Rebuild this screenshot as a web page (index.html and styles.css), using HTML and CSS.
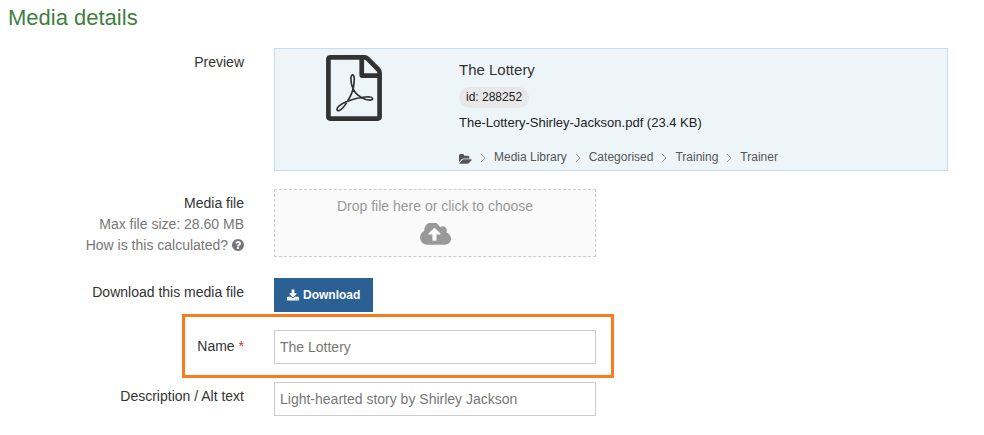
FILE: index.html
```
<!DOCTYPE html>
<html lang="en">
<head>
    <meta charset="UTF-8">
    <meta name="viewport" content="width=device-width, initial-scale=1.0">
    <title>Media details</title>
    <link rel="stylesheet" href="styles.css">
</head>
<body>
    <form class="media-form">
        <h2>Media details</h2>

        <div class="row">
            <div class="label">Preview</div>
            <div class="preview">
                <div class="preview-icon">
                    <svg class="pdf-icon" viewBox="30 30 166 196" fill="none" stroke="currentColor" stroke-linejoin="round">
                        <path stroke-width="14" d="M44 37H144Q149 37 153 41L185 73Q189 77 189 83V213Q189 219 183 219H43Q37 219 37 213V43Q37 37 44 37ZM136 37V91H188"/>
                        <path stroke-width="5" d="M110 130C102 112 102 90 109 89C116 90 114 112 111 128C106 150 84 190 69 195C60 197 60 188 69 181C86 167 130 154 157 154C170 155 172 162 162 164C145 165 120 152 110 130Z"/>
                    </svg>
                </div>
                <div class="preview-info">
                    <h3>The Lottery</h3>
                    <span class="badge">id: 288252</span>
                    <p>The-Lottery-Shirley-Jackson.pdf (23.4 KB)</p>
                    <nav class="breadcrumb" aria-label="Folder">
                        <a href="#" aria-label="Root folder"><svg class="folder-icon" viewBox="0 128 1920 1408"><path d="M1879 1080q0 31-31 66l-336 396q-43 51-120.5 86.5t-143.5 35.5h-1088q-34 0-60.5-13t-26.5-43q0-31 31-66l336-396q43-51 120.5-86.5t143.5-35.5h1088q34 0 60.5 13t26.5 43zm-343-344v160h-832q-94 0-197 47.5t-164 119.5l-337 396-5 6q0-4-.5-12.5t-.5-12.5v-960q0-92 66-158t158-66h320q92 0 158 66t66 158v32h544q92 0 158 66t66 158z"/></svg></a>
                        <svg class="chevron" viewBox="0 0 6 10"><path d="M1 1l4 4-4 4"/></svg>
                        <a href="#">Media Library</a>
                        <svg class="chevron" viewBox="0 0 6 10"><path d="M1 1l4 4-4 4"/></svg>
                        <a href="#">Categorised</a>
                        <svg class="chevron" viewBox="0 0 6 10"><path d="M1 1l4 4-4 4"/></svg>
                        <a href="#">Training</a>
                        <svg class="chevron" viewBox="0 0 6 10"><path d="M1 1l4 4-4 4"/></svg>
                        <a href="#">Trainer</a>
                    </nav>
                </div>
            </div>
        </div>

        <div class="row">
            <div class="label">
                <div id="file-label">Media file</div>
                <div class="hint">Max file size: 28.60 MB</div>
                <a class="hint" href="#">How is this calculated? <svg class="help-icon" viewBox="128 128 1536 1536"><path d="M1024 1376v-192q0-14-9-23t-23-9h-192q-14 0-23 9t-9 23v192q0 14 9 23t23 9h192q14 0 23-9t9-23zm256-672q0-88-55.5-163t-138.5-116-170-41q-243 0-371 213-15 24 8 42l132 100q7 6 19 6 16 0 25-12 53-68 86-92 34-24 86-24 48 0 85.5 26t37.5 59q0 38-20 61t-68 45q-63 28-115.5 86.5t-52.5 125.5v36q0 14 9 23t23 9h192q14 0 23-9t9-23q0-19 21.5-49.5t54.5-49.5q32-18 49-28.5t46-35 44.5-48 28-60.5 12.5-81zm384 192q0 209-103 385.5t-279.5 279.5-385.5 103-385.5-103-279.5-279.5-103-385.5 103-385.5 279.5-279.5 385.5-103 385.5 103 279.5 279.5 103 385.5z"/></svg></a>
            </div>
            <button type="button" class="dropzone" aria-describedby="file-label">
                <span>Drop file here or click to choose</span>
                <svg class="cloud-icon" viewBox="0 256 1920 1280"><path d="M1280 864q0-14-9-23l-352-352q-9-9-23-9t-23 9l-351 351q-10 12-10 24 0 14 9 23t23 9h224v352q0 13 9.5 22.5t22.5 9.5h192q13 0 22.5-9.5t9.5-22.5v-352h224q13 0 22.5-9.5t9.5-22.5zm640 288q0 159-112.5 271.5t-271.5 112.5h-1088q-185 0-316.5-131.5t-131.5-316.5q0-130 70-240t188-165q-2-30-2-43 0-212 150-362t362-150q156 0 285.5 87t188.5 231q71-62 166-62 106 0 181 75t75 181q0 76-41 138 130 31 213.5 135.5t83.5 238.5z"/></svg>
            </button>
        </div>

        <div class="row">
            <div class="label" id="download-label">Download this media file</div>
            <button type="button" class="btn" aria-describedby="download-label">
                <svg class="download-icon" viewBox="64 0 1664 1536"><path d="M1344 1344q0-26-19-45t-45-19-45 19-19 45 19 45 45 19 45-19 19-45zm256 0q0-26-19-45t-45-19-45 19-19 45 19 45 45 19 45-19 19-45zm128-224v320q0 40-28 68t-68 28h-1472q-40 0-68-28t-28-68v-320q0-40 28-68t68-28h465l135 136q58 56 136 56t136-56l136-136h464q40 0 68 28t28 68zm-325-569q17 41-14 70l-448 448q-18 19-45 19t-45-19l-448-448q-31-29-14-70 17-39 59-39h256v-448q0-26 19-45t45-19h256q26 0 45 19t19 45v448h256q42 0 59 39z"/></svg>
                Download
            </button>
        </div>

        <div class="row highlight">
            <label class="label" for="name">Name <span class="required">*</span></label>
            <input type="text" id="name" value="The Lottery" required>
        </div>

        <div class="row">
            <label class="label" for="description">Description / Alt text</label>
            <input type="text" id="description" value="Light-hearted story by Shirley Jackson">
        </div>
    </form>
</body>
</html>
```
FILE: styles.css
```
*,
*::after {
    box-sizing: border-box;
}
body {
    font-family: "Liberation Sans", Arial, sans-serif;
    font-size: 14px;
    line-height: 21px;
    color: #333;
    background: #fff;
    margin: 0;
}
.media-form {
    display: flex;
    flex-direction: column;
    gap: 18px;
    padding: 6px 36px 18px 8px;
}
h2 {
    color: #3f7f3f;
    font-size: 22px;
    font-weight: normal;
    line-height: 24px;
    margin: 0;
}
h3 {
    font-size: 15px;
    font-weight: normal;
    line-height: 21px;
    margin: 0;
}
p {
    margin: 0;
    color: #222;
    font-size: 13px;
    line-height: 21px;
}
a {
    color: #555;
    text-decoration: none;
}
svg {
    fill: currentColor;
}
.row {
    display: grid;
    grid-template-columns: 236px 1fr;
    column-gap: 30px;
    align-items: start;
    justify-items: start;
}
.label {
    justify-self: end;
    padding-top: 4px;
    text-align: right;
}
.hint {
    color: #777;
}
.help-icon {
    width: 12px;
    height: 12px;
    vertical-align: -1px;
}
.required {
    color: #d0312d;
}

/* Preview panel */
.preview {
    display: grid;
    grid-template-columns: 158px 1fr;
    column-gap: 26px;
    width: 100%;
    background: #edf5f9;
    border: 1px solid #c5dff0;
}
.preview-icon {
    display: flex;
    justify-content: center;
    padding-top: 6px;
}
.preview-icon .pdf-icon {
    width: 56px;
    height: 66px;
    fill: none;
}
.preview-info {
    display: flex;
    flex-direction: column;
    align-items: flex-start;
    gap: 4px;
    padding: 10px 0 2px;
}
.badge {
    background: #e9e8e9;
    border-radius: 11px;
    color: #222;
    font-size: 12px;
    line-height: 21px;
    margin-top: 3px;
    padding: 0 7px;
}
.breadcrumb {
    display: flex;
    align-items: center;
    gap: 8px;
    font-size: 12px;
    line-height: 21px;
    margin-top: 10px;
}
.folder-icon {
    display: block;
    width: 13px;
    height: 10px;
    overflow: visible;
}
.chevron {
    width: 6px;
    height: 10px;
    fill: none;
    stroke: #999;
}

/* Fields */
.dropzone {
    display: flex;
    flex-direction: column;
    align-items: center;
    gap: 6px;
    width: 100%;
    max-width: 322px;
    background: #fafafa;
    border: 1px dashed #ccc;
    color: #999;
    cursor: pointer;
    font: inherit;
    margin-bottom: 3px;
    padding: 6px 10px 10px;
}
.cloud-icon {
    width: 31px;
    height: 23px;
}
.btn {
    display: flex;
    align-items: center;
    gap: 4px;
    background: #2a6093;
    border: none;
    color: #fff;
    cursor: pointer;
    font-family: inherit;
    font-size: 12px;
    font-weight: bold;
    line-height: 20px;
    padding: 7px 13px;
}
.download-icon {
    width: 12px;
    height: 12px;
}
input {
    width: 100%;
    max-width: 322px;
    height: 34px;
    border: 1px solid #ccc;
    color: #777;
    font: inherit;
    padding: 0 5px;
}

/* Callout frame drawn around the name field */
.highlight {
    position: relative;
}
.highlight .label {
    padding-top: 6px;
}
.highlight::after {
    content: "";
    position: absolute;
    top: -16px;
    left: 174px;
    width: 432px;
    height: 64px;
    border: 3px solid #f97b1f;
    pointer-events: none;
}
```
